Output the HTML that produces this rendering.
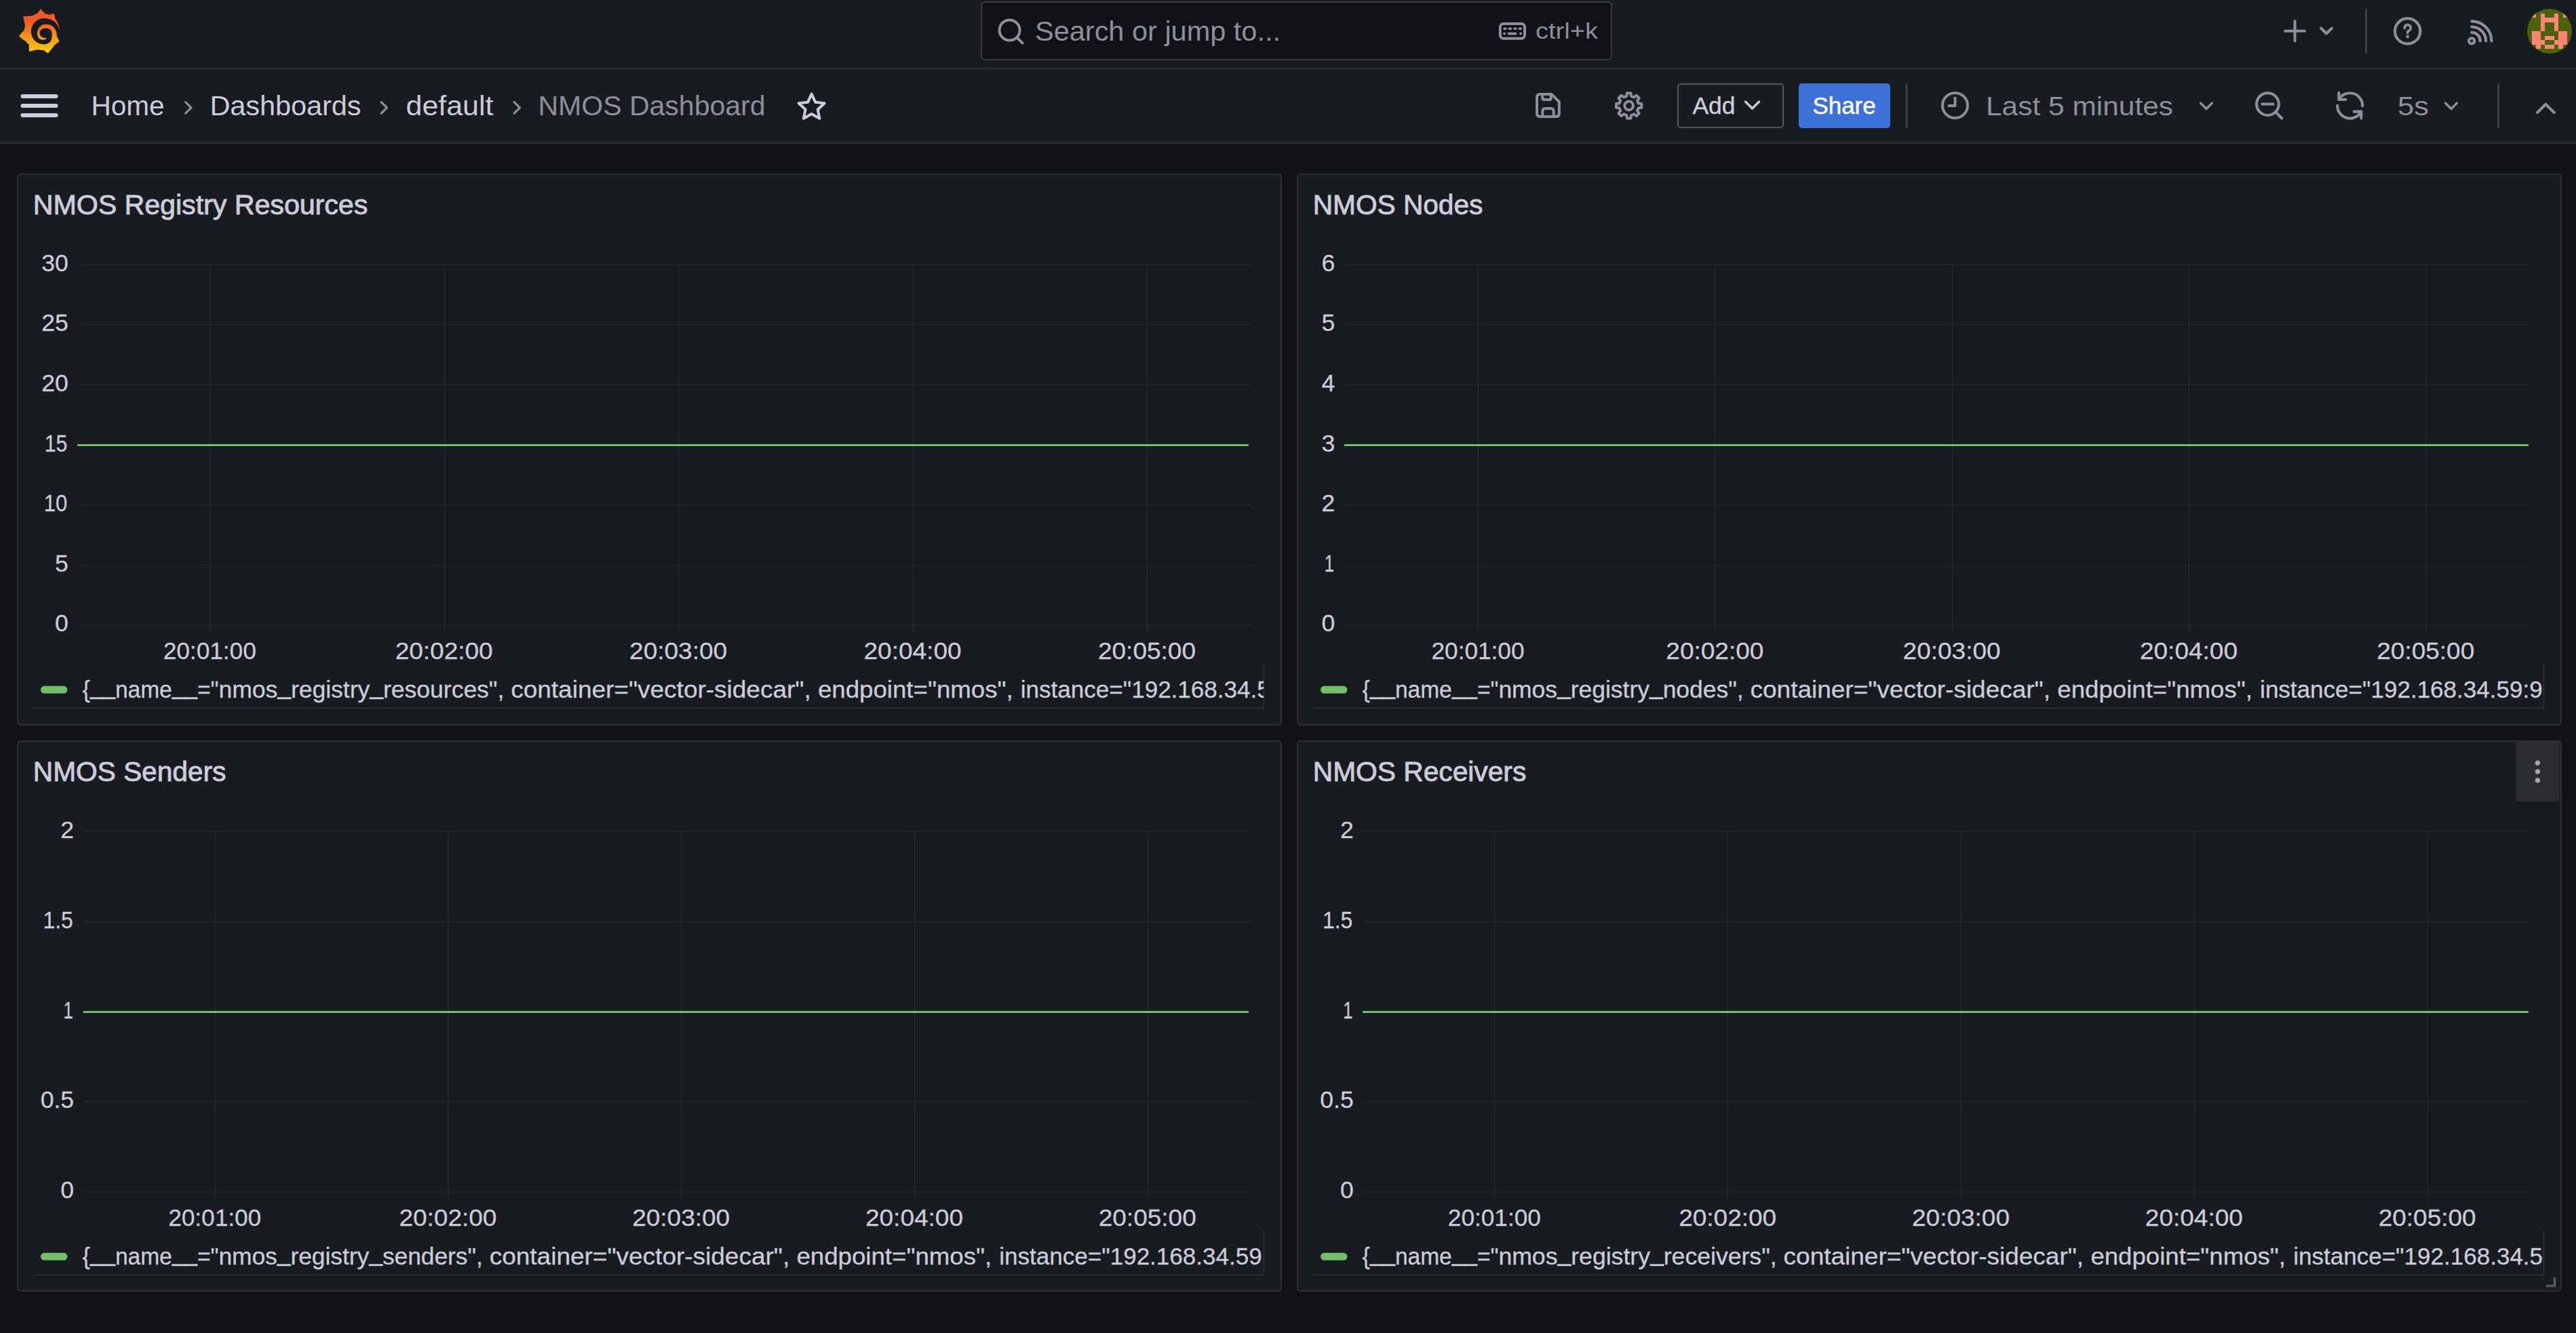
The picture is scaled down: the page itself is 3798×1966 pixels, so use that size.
<!DOCTYPE html>
<html><head><meta charset="utf-8"><title>NMOS Dashboard - Grafana</title>
<style>
html,body{margin:0;padding:0;}
body{width:3798px;height:1966px;overflow:hidden;background:#111217;position:relative;font-family:"Liberation Sans",sans-serif;}
.bar1{position:absolute;left:0;top:0;width:3798px;height:100px;background:#181b1f;border-bottom:2px solid #2e3036;}
.bar2{position:absolute;left:0;top:102px;width:3798px;height:108px;background:#181b1f;border-bottom:2px solid #2e3036;}
.panel{position:absolute;background:#181b1f;border:2px solid #2e3036;border-radius:5px;}
.ov{position:absolute;left:0;top:0;}
svg text{font-family:"Liberation Sans",sans-serif;white-space:pre;}
</style></head><body>
<header class="bar1"></header>
<nav class="bar2"></nav>
<div style="position:absolute;left:1446px;top:2px;width:927px;height:83px;border:2px solid #3a3b41;border-radius:6px;background:#111217"></div><div style="position:absolute;left:2473px;top:123px;width:153px;height:62px;border:2px solid #52555d;border-radius:5px"></div><div style="position:absolute;left:2652px;top:123px;width:135px;height:66px;border-radius:5px;background:#3d71d9"></div><div class="panel" style="left:25px;top:256px;width:1861px;height:810px"></div><div class="panel" style="left:1912px;top:256px;width:1861px;height:810px"></div><div class="panel" style="left:25px;top:1092px;width:1861px;height:809px"></div><div class="panel" style="left:1912px;top:1092px;width:1861px;height:809px"></div><div style="position:absolute;left:3709px;top:1094px;width:65px;height:88px;border-radius:5px;background:#2a2c31"></div>
<svg class="ov" width="3798" height="1966" viewBox="0 0 3798 1966"><g transform="translate(20,8) scale(0.057)">
<defs><linearGradient id="lg" x1="0" y1="80" x2="0" y2="1250" gradientUnits="userSpaceOnUse"><stop offset="0" stop-color="#f05a28"/><stop offset="0.3" stop-color="#f05a28"/><stop offset="1" stop-color="#fbd50a"/></linearGradient></defs>
<path fill="url(#lg)" d="M710 90 C740 130 780 170 805 205 C850 225 900 235 945 238 C980 225 1020 215 1050 212 C1060 255 1070 300 1078 345 C1140 420 1180 520 1192 640 L1135 822 C1150 860 1170 900 1185 935 C1140 965 1100 995 1065 1020 C1010 1090 950 1170 885 1240 C850 1210 810 1180 770 1160 C710 1148 650 1145 590 1145 C530 1165 470 1180 405 1195 C400 1130 400 1070 398 1010 C360 985 340 960 320 930 C260 900 200 850 140 800 C180 740 220 690 268 655 C280 610 290 565 300 520 C280 440 260 360 250 282 C330 275 410 272 480 270 C520 250 570 225 610 210 C640 170 680 125 710 90 Z"/>
<path fill="#181b1f" d="M1192 642 C1160 520 1085 415 960 366 C880 340 830 334 790 334 A338 338 0 0 0 452 672 A338 338 0 0 0 790 1010 C870 1005 930 960 965 921 C985 890 995 850 995 800 L1123 816 L1260 816 L1260 642 Z"/>
<path fill="url(#lg)" d="M1123 830 C1125 720 1100 640 1045 570 C990 510 920 489 833 489 C700 489 612 600 612 737 C612 830 680 892 760 892 C800 892 835 878 856 848 C845 843 838 841 833 841 C740 841 675 790 675 715 C675 640 745 589 833 589 C920 589 991 640 991 715 C993 760 995 785 995 800 C990 860 980 900 965 921 L1123 921 Z"/>
</g><circle cx="1488.5" cy="44.5" r="15" fill="none" stroke="#8f8f9b" stroke-width="4"/><line x1="1499.5" y1="55.5" x2="1507.5" y2="63.5" stroke="#8f8f9b" stroke-width="4" stroke-linecap="round"/><text x="1526.00" y="60.40" font-size="40" fill="#8f8f9b" textLength="362.00" lengthAdjust="spacingAndGlyphs">Search or jump to...</text><rect x="2211.8" y="35" width="36.2" height="21.8" rx="5" fill="none" stroke="#8f8f9b" stroke-width="4"/><rect x="2216.3" y="40.5" width="5.5" height="3.6" rx="1.8" fill="#8f8f9b"/><rect x="2223.7" y="40.5" width="5.5" height="3.6" rx="1.8" fill="#8f8f9b"/><rect x="2231.1" y="40.5" width="5.5" height="3.6" rx="1.8" fill="#8f8f9b"/><rect x="2238.5" y="40.5" width="5.5" height="3.6" rx="1.8" fill="#8f8f9b"/><circle cx="2218.2" cy="49.6" r="2" fill="#8f8f9b"/><circle cx="2242" cy="49.6" r="2" fill="#8f8f9b"/><rect x="2222.5" y="47.8" width="14" height="3.6" rx="1.8" fill="#8f8f9b"/><text x="2264.00" y="57.10" font-size="33" fill="#8f8f9b" textLength="92.00" lengthAdjust="spacingAndGlyphs">ctrl+k</text><path d="M3383.5 31 V60.5 M3369 45.8 H3398" stroke="#8f8f9b" stroke-width="4" stroke-linecap="round" fill="none"/><path d="M3422 41.5 L3430 49.5 L3438 41.5" stroke="#8f8f9b" stroke-width="4" stroke-linecap="round" stroke-linejoin="round" fill="none"/><rect x="3487" y="13" width="3" height="66" fill="#3d4047"/><circle cx="3549.7" cy="45.9" r="18.7" fill="none" stroke="#8f8f9b" stroke-width="4.2"/><path d="M3545.3 41.3 A4.5 4.5 0 1 1 3551.6 45.2 Q3549.7 46.3 3549.7 48.4" stroke="#8f8f9b" stroke-width="3.8" stroke-linecap="round" fill="none"/><circle cx="3549.7" cy="54" r="2.4" fill="#8f8f9b"/><circle cx="3644.2" cy="60.4" r="4.1" fill="none" stroke="#8f8f9b" stroke-width="4"/><path d="M3644.3 47.9 A12.5 12.5 0 0 1 3656.8 60.4 M3644.3 39.6 A20.8 20.8 0 0 1 3665.1 60.4 M3644.3 31.3 A29.1 29.1 0 0 1 3673.4 60.4" stroke="#8f8f9b" stroke-width="4.2" stroke-linecap="round" fill="none"/><defs><clipPath id="avc"><circle cx="3759" cy="45.9" r="33"/></clipPath></defs><g clip-path="url(#avc)"><rect x="3720" y="8" width="80" height="80" fill="#4a620a"/><path d="M3732.60 19.70h6.58v6.58h-6.58zM3745.76 19.70h6.58v6.58h-6.58zM3765.50 19.70h6.58v6.58h-6.58zM3778.66 19.70h6.58v6.58h-6.58zM3745.76 26.28h6.58v6.58h-6.58zM3752.34 26.28h6.58v6.58h-6.58zM3758.92 26.28h6.58v6.58h-6.58zM3765.50 26.28h6.58v6.58h-6.58zM3745.76 32.86h6.58v6.58h-6.58zM3765.50 32.86h6.58v6.58h-6.58zM3745.76 39.44h6.58v6.58h-6.58zM3765.50 39.44h6.58v6.58h-6.58zM3732.60 46.02h6.58v6.58h-6.58zM3739.18 46.02h6.58v6.58h-6.58zM3772.08 46.02h6.58v6.58h-6.58zM3778.66 46.02h6.58v6.58h-6.58zM3732.60 52.60h6.58v6.58h-6.58zM3739.18 52.60h6.58v6.58h-6.58zM3752.34 52.60h6.58v6.58h-6.58zM3758.92 52.60h6.58v6.58h-6.58zM3772.08 52.60h6.58v6.58h-6.58zM3778.66 52.60h6.58v6.58h-6.58zM3732.60 59.18h6.58v6.58h-6.58zM3739.18 59.18h6.58v6.58h-6.58zM3745.76 59.18h6.58v6.58h-6.58zM3765.50 59.18h6.58v6.58h-6.58zM3772.08 59.18h6.58v6.58h-6.58zM3778.66 59.18h6.58v6.58h-6.58zM3739.18 65.76h6.58v6.58h-6.58zM3752.34 65.76h6.58v6.58h-6.58zM3758.92 65.76h6.58v6.58h-6.58zM3772.08 65.76h6.58v6.58h-6.58z" fill="#fd8477" shape-rendering="crispEdges"/></g><rect x="30.5" y="139.1" width="55" height="5.8" rx="2.9" fill="#ccccdc"/><rect x="30.5" y="153.1" width="55" height="5.8" rx="2.9" fill="#ccccdc"/><rect x="30.5" y="167.1" width="55" height="5.8" rx="2.9" fill="#ccccdc"/><text x="134.50" y="169.60" font-size="41" fill="#ccccdc" textLength="108.00" lengthAdjust="spacingAndGlyphs">Home</text><path d="M273.6 150.7 L281.9 158.9 L273.6 167.1" stroke="#8f8f9b" stroke-width="3.2" stroke-linecap="round" stroke-linejoin="round" fill="none"/><text x="309.50" y="169.60" font-size="41" fill="#ccccdc" textLength="223.00" lengthAdjust="spacingAndGlyphs">Dashboards</text><path d="M562.2 150.7 L570.5 158.9 L562.2 167.1" stroke="#8f8f9b" stroke-width="3.2" stroke-linecap="round" stroke-linejoin="round" fill="none"/><text x="598.50" y="169.60" font-size="41" fill="#ccccdc" textLength="129.00" lengthAdjust="spacingAndGlyphs">default</text><path d="M758.1 150.7 L766.4 158.9 L758.1 167.1" stroke="#8f8f9b" stroke-width="3.2" stroke-linecap="round" stroke-linejoin="round" fill="none"/><text x="793.50" y="169.60" font-size="41" fill="#8f8f9b" textLength="335.00" lengthAdjust="spacingAndGlyphs">NMOS Dashboard</text><polygon points="1196.60,138.50 1202.18,150.81 1215.62,152.32 1205.64,161.44 1208.36,174.68 1196.60,168.00 1184.84,174.68 1187.56,161.44 1177.58,152.32 1191.02,150.81" fill="none" stroke="#ccccdc" stroke-width="4" stroke-linejoin="round"/><path d="M2270.4 139 H2287.6 L2298.8 150.2 V167.6 Q2298.8 172 2294.4 172 H2270.4 Q2266 172 2266 167.6 V143.4 Q2266 139 2270.4 139 Z" fill="none" stroke="#8f8f9b" stroke-width="4" stroke-linejoin="round"/><path d="M2274.3 139 V144.6 Q2274.3 147.1 2276.8 147.1 H2284.2 Q2286.7 147.1 2286.7 144.6 V139" fill="none" stroke="#8f8f9b" stroke-width="4"/><path d="M2274.3 172 V164 Q2274.3 160 2278.3 160 H2286.7 Q2290.7 160 2290.7 164 V172" fill="none" stroke="#8f8f9b" stroke-width="4"/><polygon points="2415.69,152.49 2420.19,153.07 2420.19,158.73 2415.69,159.31 2413.98,163.45 2416.74,167.04 2412.74,171.04 2409.15,168.28 2405.01,169.99 2404.43,174.49 2398.77,174.49 2398.19,169.99 2394.05,168.28 2390.46,171.04 2386.46,167.04 2389.22,163.45 2387.51,159.31 2383.01,158.73 2383.01,153.07 2387.51,152.49 2389.22,148.35 2386.46,144.76 2390.46,140.76 2394.05,143.52 2398.19,141.81 2398.77,137.31 2404.43,137.31 2405.01,141.81 2409.15,143.52 2412.74,140.76 2416.74,144.76 2413.98,148.35" fill="none" stroke="#8f8f9b" stroke-width="4" stroke-linejoin="round"/><circle cx="2401.6" cy="155.9" r="6.3" fill="none" stroke="#8f8f9b" stroke-width="4"/><text x="2495.50" y="168.40" font-size="35" fill="#ccccdc" textLength="63.00" lengthAdjust="spacingAndGlyphs" stroke="#ccccdc" stroke-width="0.4">Add</text><path d="M2573.5 150 L2583.5 160 L2593.5 150" stroke="#ccccdc" stroke-width="3.5" stroke-linecap="round" stroke-linejoin="round" fill="none"/><text x="2672.60" y="168.40" font-size="35" fill="#ffffff" textLength="93.00" lengthAdjust="spacingAndGlyphs" stroke="#ffffff" stroke-width="0.5">Share</text><rect x="2809.5" y="123" width="3" height="66" fill="#3d4047"/><circle cx="2882.5" cy="155.5" r="18.5" fill="none" stroke="#8f8f9b" stroke-width="4"/><path d="M2882.5 144.5 V156 H2873.5" stroke="#8f8f9b" stroke-width="4" stroke-linecap="round" stroke-linejoin="round" fill="none"/><text x="2928.00" y="169.70" font-size="39" fill="#8f8f9b" textLength="276.00" lengthAdjust="spacingAndGlyphs">Last 5 minutes</text><path d="M3244.5 152 L3253 160.5 L3261.5 152" stroke="#8f8f9b" stroke-width="3.5" stroke-linecap="round" stroke-linejoin="round" fill="none"/><circle cx="3343.4" cy="153.6" r="16.4" fill="none" stroke="#8f8f9b" stroke-width="4"/><path d="M3355 165.2 L3364.3 174.5 M3335.3 153.6 H3351.5" stroke="#8f8f9b" stroke-width="4" stroke-linecap="round" fill="none"/><path d="M3448.4 146.7 A18.6 18.6 0 0 1 3483.2 156.3 M3446.2 155.8 A18.6 18.6 0 0 0 3481.3 164.6" stroke="#8f8f9b" stroke-width="4.1" stroke-linecap="round" fill="none"/><path d="M3448.4 136.9 V146.7 H3458.2 M3470.8 164.6 H3481.3 V174.4" stroke="#8f8f9b" stroke-width="4.1" stroke-linecap="round" stroke-linejoin="round" fill="none"/><text x="3535.00" y="169.70" font-size="39" fill="#8f8f9b" textLength="46.00" lengthAdjust="spacingAndGlyphs">5s</text><path d="M3605.5 152 L3614 160.5 L3622.5 152" stroke="#8f8f9b" stroke-width="3.5" stroke-linecap="round" stroke-linejoin="round" fill="none"/><rect x="3682" y="123" width="3" height="66" fill="#3d4047"/><path d="M3741 166 L3753.3 153.8 L3765.8 166" stroke="#8f8f9b" stroke-width="4.2" stroke-linecap="round" stroke-linejoin="round" fill="none"/><text x="48.80" y="315.80" font-size="40" fill="#ccccdc" textLength="493.50" lengthAdjust="spacingAndGlyphs" stroke="#ccccdc" stroke-width="0.9">NMOS Registry Resources</text><rect x="115.2" y="390" width="1727.2" height="1" fill="#2a2d32"/><text x="100.70" y="400.30" font-size="35.5" fill="#ccccdc" text-anchor="end" stroke="#ccccdc" stroke-width="0.3">30</text><rect x="115.2" y="478" width="1727.2" height="1" fill="#2a2d32"/><text x="100.70" y="488.30" font-size="35.5" fill="#ccccdc" text-anchor="end" stroke="#ccccdc" stroke-width="0.3">25</text><rect x="115.2" y="567" width="1727.2" height="1" fill="#2a2d32"/><text x="100.70" y="577.30" font-size="35.5" fill="#ccccdc" text-anchor="end" stroke="#ccccdc" stroke-width="0.3">20</text><rect x="115.2" y="655" width="1727.2" height="1" fill="#2a2d32"/><text x="99.40" y="665.80" font-size="35.5" fill="#ccccdc" text-anchor="end" textLength="33.60" lengthAdjust="spacingAndGlyphs" stroke="#ccccdc" stroke-width="0.3">15</text><rect x="115.2" y="744" width="1727.2" height="1" fill="#2a2d32"/><text x="99.40" y="754.30" font-size="35.5" fill="#ccccdc" text-anchor="end" textLength="34.59" lengthAdjust="spacingAndGlyphs" stroke="#ccccdc" stroke-width="0.3">10</text><rect x="115.2" y="833" width="1727.2" height="1" fill="#2a2d32"/><text x="100.70" y="843.30" font-size="35.5" fill="#ccccdc" text-anchor="end" stroke="#ccccdc" stroke-width="0.3">5</text><rect x="115.2" y="921" width="1727.2" height="1" fill="#2a2d32"/><text x="100.70" y="931.30" font-size="35.5" fill="#ccccdc" text-anchor="end" stroke="#ccccdc" stroke-width="0.3">0</text><rect x="309" y="390" width="1" height="543" fill="#2a2d32"/><text x="309.22" y="972.20" font-size="35.5" fill="#ccccdc" text-anchor="middle" textLength="137.00" lengthAdjust="spacingAndGlyphs" stroke="#ccccdc" stroke-width="0.3">20:01:00</text><rect x="655" y="390" width="1" height="543" fill="#2a2d32"/><text x="654.66" y="972.20" font-size="35.5" fill="#ccccdc" text-anchor="middle" textLength="144.00" lengthAdjust="spacingAndGlyphs" stroke="#ccccdc" stroke-width="0.3">20:02:00</text><rect x="1000" y="390" width="1" height="543" fill="#2a2d32"/><text x="1000.10" y="972.20" font-size="35.5" fill="#ccccdc" text-anchor="middle" textLength="144.00" lengthAdjust="spacingAndGlyphs" stroke="#ccccdc" stroke-width="0.3">20:03:00</text><rect x="1346" y="390" width="1" height="543" fill="#2a2d32"/><text x="1345.54" y="972.20" font-size="35.5" fill="#ccccdc" text-anchor="middle" textLength="144.00" lengthAdjust="spacingAndGlyphs" stroke="#ccccdc" stroke-width="0.3">20:04:00</text><rect x="1691" y="390" width="1" height="543" fill="#2a2d32"/><text x="1690.98" y="972.20" font-size="35.5" fill="#ccccdc" text-anchor="middle" textLength="144.00" lengthAdjust="spacingAndGlyphs" stroke="#ccccdc" stroke-width="0.3">20:05:00</text><rect x="114.2" y="655" width="1726.7" height="3" fill="#73bf69"/><rect x="60" y="1011.8" width="39.4" height="11" rx="5.5" fill="#73bf69"/><defs><clipPath id="lc0"><rect x="115" y="976" width="1748" height="68"/></clipPath></defs><g clip-path="url(#lc0)"><text x="121.50" y="1028.80" font-size="35.5" fill="#ccccdc" textLength="200.90" lengthAdjust="spacingAndGlyphs" stroke="#ccccdc" stroke-width="0.3">{<tspan dy="-5">__</tspan><tspan dy="5">​</tspan>name<tspan dy="-5">__</tspan><tspan dy="5">​</tspan>=&quot;</text><text x="322.40" y="1028.80" font-size="35.5" fill="#ccccdc" textLength="430.80" lengthAdjust="spacingAndGlyphs" stroke="#ccccdc" stroke-width="0.3">nmos<tspan dy="-5">_</tspan><tspan dy="5">​</tspan>registry<tspan dy="-5">_</tspan><tspan dy="5">​</tspan>resources&quot;, </text><text x="753.20" y="1028.80" font-size="35.5" fill="#ccccdc" textLength="452.80" lengthAdjust="spacingAndGlyphs" stroke="#ccccdc" stroke-width="0.3">container=&quot;vector-sidecar&quot;, </text><text x="1206.00" y="1028.80" font-size="35.5" fill="#ccccdc" textLength="297.80" lengthAdjust="spacingAndGlyphs" stroke="#ccccdc" stroke-width="0.3">endpoint=&quot;nmos&quot;, </text><text x="1504.80" y="1028.80" font-size="35.5" fill="#ccccdc" textLength="1154.45" lengthAdjust="spacingAndGlyphs" stroke="#ccccdc" stroke-width="0.3">instance=&quot;192.168.34.59:9100&quot;, job=&quot;nmos-registry&quot;, namespace=&quot;nmos&quot;}</text></g><rect x="49" y="1044" width="1814" height="1" fill="#3e3c39"/><rect x="1863" y="979" width="1" height="66" fill="#3e3c39"/><text x="1935.80" y="315.80" font-size="40" fill="#ccccdc" textLength="250.50" lengthAdjust="spacingAndGlyphs" stroke="#ccccdc" stroke-width="0.9">NMOS Nodes</text><rect x="1982.8" y="390" width="1746.6" height="1" fill="#2a2d32"/><text x="1968.30" y="400.30" font-size="35.5" fill="#ccccdc" text-anchor="end" stroke="#ccccdc" stroke-width="0.3">6</text><rect x="1982.8" y="478" width="1746.6" height="1" fill="#2a2d32"/><text x="1968.30" y="488.30" font-size="35.5" fill="#ccccdc" text-anchor="end" stroke="#ccccdc" stroke-width="0.3">5</text><rect x="1982.8" y="567" width="1746.6" height="1" fill="#2a2d32"/><text x="1968.30" y="577.30" font-size="35.5" fill="#ccccdc" text-anchor="end" stroke="#ccccdc" stroke-width="0.3">4</text><rect x="1982.8" y="655" width="1746.6" height="1" fill="#2a2d32"/><text x="1968.30" y="665.80" font-size="35.5" fill="#ccccdc" text-anchor="end" stroke="#ccccdc" stroke-width="0.3">3</text><rect x="1982.8" y="744" width="1746.6" height="1" fill="#2a2d32"/><text x="1968.30" y="754.30" font-size="35.5" fill="#ccccdc" text-anchor="end" stroke="#ccccdc" stroke-width="0.3">2</text><rect x="1982.8" y="833" width="1746.6" height="1" fill="#2a2d32"/><text x="1967.00" y="843.30" font-size="35.5" fill="#ccccdc" text-anchor="end" textLength="14.22" lengthAdjust="spacingAndGlyphs" stroke="#ccccdc" stroke-width="0.3">1</text><rect x="1982.8" y="921" width="1746.6" height="1" fill="#2a2d32"/><text x="1968.30" y="931.30" font-size="35.5" fill="#ccccdc" text-anchor="end" stroke="#ccccdc" stroke-width="0.3">0</text><rect x="2179" y="390" width="1" height="543" fill="#2a2d32"/><text x="2179.00" y="972.20" font-size="35.5" fill="#ccccdc" text-anchor="middle" textLength="137.00" lengthAdjust="spacingAndGlyphs" stroke="#ccccdc" stroke-width="0.3">20:01:00</text><rect x="2528" y="390" width="1" height="543" fill="#2a2d32"/><text x="2528.32" y="972.20" font-size="35.5" fill="#ccccdc" text-anchor="middle" textLength="144.00" lengthAdjust="spacingAndGlyphs" stroke="#ccccdc" stroke-width="0.3">20:02:00</text><rect x="2878" y="390" width="1" height="543" fill="#2a2d32"/><text x="2877.64" y="972.20" font-size="35.5" fill="#ccccdc" text-anchor="middle" textLength="144.00" lengthAdjust="spacingAndGlyphs" stroke="#ccccdc" stroke-width="0.3">20:03:00</text><rect x="3227" y="390" width="1" height="543" fill="#2a2d32"/><text x="3226.96" y="972.20" font-size="35.5" fill="#ccccdc" text-anchor="middle" textLength="144.00" lengthAdjust="spacingAndGlyphs" stroke="#ccccdc" stroke-width="0.3">20:04:00</text><rect x="3576" y="390" width="1" height="543" fill="#2a2d32"/><text x="3576.28" y="972.20" font-size="35.5" fill="#ccccdc" text-anchor="middle" textLength="144.00" lengthAdjust="spacingAndGlyphs" stroke="#ccccdc" stroke-width="0.3">20:05:00</text><rect x="1981.8" y="655" width="1746.1" height="3" fill="#73bf69"/><rect x="1947" y="1011.8" width="39.4" height="11" rx="5.5" fill="#73bf69"/><defs><clipPath id="lc1"><rect x="2002" y="976" width="1748" height="68"/></clipPath></defs><g clip-path="url(#lc1)"><text x="2008.50" y="1028.80" font-size="35.5" fill="#ccccdc" textLength="200.90" lengthAdjust="spacingAndGlyphs" stroke="#ccccdc" stroke-width="0.3">{<tspan dy="-5">__</tspan><tspan dy="5">​</tspan>name<tspan dy="-5">__</tspan><tspan dy="5">​</tspan>=&quot;</text><text x="2209.40" y="1028.80" font-size="35.5" fill="#ccccdc" textLength="371.10" lengthAdjust="spacingAndGlyphs" stroke="#ccccdc" stroke-width="0.3">nmos<tspan dy="-5">_</tspan><tspan dy="5">​</tspan>registry<tspan dy="-5">_</tspan><tspan dy="5">​</tspan>nodes&quot;, </text><text x="2580.50" y="1028.80" font-size="35.5" fill="#ccccdc" textLength="452.80" lengthAdjust="spacingAndGlyphs" stroke="#ccccdc" stroke-width="0.3">container=&quot;vector-sidecar&quot;, </text><text x="3033.30" y="1028.80" font-size="35.5" fill="#ccccdc" textLength="297.80" lengthAdjust="spacingAndGlyphs" stroke="#ccccdc" stroke-width="0.3">endpoint=&quot;nmos&quot;, </text><text x="3332.10" y="1028.80" font-size="35.5" fill="#ccccdc" textLength="1154.45" lengthAdjust="spacingAndGlyphs" stroke="#ccccdc" stroke-width="0.3">instance=&quot;192.168.34.59:9100&quot;, job=&quot;nmos-registry&quot;, namespace=&quot;nmos&quot;}</text></g><rect x="1936" y="1044" width="1814" height="1" fill="#3e3c39"/><rect x="3750" y="979" width="1" height="66" fill="#3e3c39"/><text x="48.80" y="1151.80" font-size="40" fill="#ccccdc" textLength="284.50" lengthAdjust="spacingAndGlyphs" stroke="#ccccdc" stroke-width="0.9">NMOS Senders</text><rect x="123.6" y="1226" width="1718.8" height="1" fill="#2a2d32"/><text x="109.10" y="1236.30" font-size="35.5" fill="#ccccdc" text-anchor="end" stroke="#ccccdc" stroke-width="0.3">2</text><rect x="123.6" y="1359" width="1718.8" height="1" fill="#2a2d32"/><text x="107.80" y="1369.30" font-size="35.5" fill="#ccccdc" text-anchor="end" textLength="44.42" lengthAdjust="spacingAndGlyphs" stroke="#ccccdc" stroke-width="0.3">1.5</text><rect x="123.6" y="1492" width="1718.8" height="1" fill="#2a2d32"/><text x="107.80" y="1502.30" font-size="35.5" fill="#ccccdc" text-anchor="end" textLength="14.22" lengthAdjust="spacingAndGlyphs" stroke="#ccccdc" stroke-width="0.3">1</text><rect x="123.6" y="1624" width="1718.8" height="1" fill="#2a2d32"/><text x="109.10" y="1634.30" font-size="35.5" fill="#ccccdc" text-anchor="end" stroke="#ccccdc" stroke-width="0.3">0.5</text><rect x="123.6" y="1757" width="1718.8" height="1" fill="#2a2d32"/><text x="109.10" y="1767.30" font-size="35.5" fill="#ccccdc" text-anchor="end" stroke="#ccccdc" stroke-width="0.3">0</text><rect x="317" y="1226" width="1" height="543" fill="#2a2d32"/><text x="316.68" y="1808.20" font-size="35.5" fill="#ccccdc" text-anchor="middle" textLength="137.00" lengthAdjust="spacingAndGlyphs" stroke="#ccccdc" stroke-width="0.3">20:01:00</text><rect x="660" y="1226" width="1" height="543" fill="#2a2d32"/><text x="660.44" y="1808.20" font-size="35.5" fill="#ccccdc" text-anchor="middle" textLength="144.00" lengthAdjust="spacingAndGlyphs" stroke="#ccccdc" stroke-width="0.3">20:02:00</text><rect x="1004" y="1226" width="1" height="543" fill="#2a2d32"/><text x="1004.20" y="1808.20" font-size="35.5" fill="#ccccdc" text-anchor="middle" textLength="144.00" lengthAdjust="spacingAndGlyphs" stroke="#ccccdc" stroke-width="0.3">20:03:00</text><rect x="1348" y="1226" width="1" height="543" fill="#2a2d32"/><text x="1347.96" y="1808.20" font-size="35.5" fill="#ccccdc" text-anchor="middle" textLength="144.00" lengthAdjust="spacingAndGlyphs" stroke="#ccccdc" stroke-width="0.3">20:04:00</text><rect x="1692" y="1226" width="1" height="543" fill="#2a2d32"/><text x="1691.72" y="1808.20" font-size="35.5" fill="#ccccdc" text-anchor="middle" textLength="144.00" lengthAdjust="spacingAndGlyphs" stroke="#ccccdc" stroke-width="0.3">20:05:00</text><rect x="122.6" y="1491" width="1718.3" height="3" fill="#73bf69"/><rect x="60" y="1847.8" width="39.4" height="11" rx="5.5" fill="#73bf69"/><defs><clipPath id="lc2"><rect x="115" y="1812" width="1748" height="68"/></clipPath></defs><g clip-path="url(#lc2)"><text x="121.50" y="1864.80" font-size="35.5" fill="#ccccdc" textLength="200.90" lengthAdjust="spacingAndGlyphs" stroke="#ccccdc" stroke-width="0.3">{<tspan dy="-5">__</tspan><tspan dy="5">​</tspan>name<tspan dy="-5">__</tspan><tspan dy="5">​</tspan>=&quot;</text><text x="322.40" y="1864.80" font-size="35.5" fill="#ccccdc" textLength="399.30" lengthAdjust="spacingAndGlyphs" stroke="#ccccdc" stroke-width="0.3">nmos<tspan dy="-5">_</tspan><tspan dy="5">​</tspan>registry<tspan dy="-5">_</tspan><tspan dy="5">​</tspan>senders&quot;, </text><text x="721.70" y="1864.80" font-size="35.5" fill="#ccccdc" textLength="452.80" lengthAdjust="spacingAndGlyphs" stroke="#ccccdc" stroke-width="0.3">container=&quot;vector-sidecar&quot;, </text><text x="1174.50" y="1864.80" font-size="35.5" fill="#ccccdc" textLength="297.80" lengthAdjust="spacingAndGlyphs" stroke="#ccccdc" stroke-width="0.3">endpoint=&quot;nmos&quot;, </text><text x="1473.30" y="1864.80" font-size="35.5" fill="#ccccdc" textLength="1154.45" lengthAdjust="spacingAndGlyphs" stroke="#ccccdc" stroke-width="0.3">instance=&quot;192.168.34.59:9100&quot;, job=&quot;nmos-registry&quot;, namespace=&quot;nmos&quot;}</text></g><rect x="49" y="1880" width="1814" height="1" fill="#3e3c39"/><rect x="1863" y="1815" width="1" height="66" fill="#3e3c39"/><text x="1935.80" y="1151.80" font-size="40" fill="#ccccdc" textLength="314.50" lengthAdjust="spacingAndGlyphs" stroke="#ccccdc" stroke-width="0.9">NMOS Receivers</text><rect x="2010.2" y="1226" width="1719.2" height="1" fill="#2a2d32"/><text x="1995.70" y="1236.30" font-size="35.5" fill="#ccccdc" text-anchor="end" stroke="#ccccdc" stroke-width="0.3">2</text><rect x="2010.2" y="1359" width="1719.2" height="1" fill="#2a2d32"/><text x="1994.40" y="1369.30" font-size="35.5" fill="#ccccdc" text-anchor="end" textLength="44.42" lengthAdjust="spacingAndGlyphs" stroke="#ccccdc" stroke-width="0.3">1.5</text><rect x="2010.2" y="1492" width="1719.2" height="1" fill="#2a2d32"/><text x="1994.40" y="1502.30" font-size="35.5" fill="#ccccdc" text-anchor="end" textLength="14.22" lengthAdjust="spacingAndGlyphs" stroke="#ccccdc" stroke-width="0.3">1</text><rect x="2010.2" y="1624" width="1719.2" height="1" fill="#2a2d32"/><text x="1995.70" y="1634.30" font-size="35.5" fill="#ccccdc" text-anchor="end" stroke="#ccccdc" stroke-width="0.3">0.5</text><rect x="2010.2" y="1757" width="1719.2" height="1" fill="#2a2d32"/><text x="1995.70" y="1767.30" font-size="35.5" fill="#ccccdc" text-anchor="end" stroke="#ccccdc" stroke-width="0.3">0</text><rect x="2203" y="1226" width="1" height="543" fill="#2a2d32"/><text x="2203.32" y="1808.20" font-size="35.5" fill="#ccccdc" text-anchor="middle" textLength="137.00" lengthAdjust="spacingAndGlyphs" stroke="#ccccdc" stroke-width="0.3">20:01:00</text><rect x="2547" y="1226" width="1" height="543" fill="#2a2d32"/><text x="2547.16" y="1808.20" font-size="35.5" fill="#ccccdc" text-anchor="middle" textLength="144.00" lengthAdjust="spacingAndGlyphs" stroke="#ccccdc" stroke-width="0.3">20:02:00</text><rect x="2891" y="1226" width="1" height="543" fill="#2a2d32"/><text x="2891.00" y="1808.20" font-size="35.5" fill="#ccccdc" text-anchor="middle" textLength="144.00" lengthAdjust="spacingAndGlyphs" stroke="#ccccdc" stroke-width="0.3">20:03:00</text><rect x="3235" y="1226" width="1" height="543" fill="#2a2d32"/><text x="3234.84" y="1808.20" font-size="35.5" fill="#ccccdc" text-anchor="middle" textLength="144.00" lengthAdjust="spacingAndGlyphs" stroke="#ccccdc" stroke-width="0.3">20:04:00</text><rect x="3579" y="1226" width="1" height="543" fill="#2a2d32"/><text x="3578.68" y="1808.20" font-size="35.5" fill="#ccccdc" text-anchor="middle" textLength="144.00" lengthAdjust="spacingAndGlyphs" stroke="#ccccdc" stroke-width="0.3">20:05:00</text><rect x="2009.2" y="1491" width="1718.7" height="3" fill="#73bf69"/><rect x="1947" y="1847.8" width="39.4" height="11" rx="5.5" fill="#73bf69"/><defs><clipPath id="lc3"><rect x="2002" y="1812" width="1748" height="68"/></clipPath></defs><g clip-path="url(#lc3)"><text x="2008.50" y="1864.80" font-size="35.5" fill="#ccccdc" textLength="200.90" lengthAdjust="spacingAndGlyphs" stroke="#ccccdc" stroke-width="0.3">{<tspan dy="-5">__</tspan><tspan dy="5">​</tspan>name<tspan dy="-5">__</tspan><tspan dy="5">​</tspan>=&quot;</text><text x="2209.40" y="1864.80" font-size="35.5" fill="#ccccdc" textLength="420.20" lengthAdjust="spacingAndGlyphs" stroke="#ccccdc" stroke-width="0.3">nmos<tspan dy="-5">_</tspan><tspan dy="5">​</tspan>registry<tspan dy="-5">_</tspan><tspan dy="5">​</tspan>receivers&quot;, </text><text x="2629.60" y="1864.80" font-size="35.5" fill="#ccccdc" textLength="452.80" lengthAdjust="spacingAndGlyphs" stroke="#ccccdc" stroke-width="0.3">container=&quot;vector-sidecar&quot;, </text><text x="3082.40" y="1864.80" font-size="35.5" fill="#ccccdc" textLength="297.80" lengthAdjust="spacingAndGlyphs" stroke="#ccccdc" stroke-width="0.3">endpoint=&quot;nmos&quot;, </text><text x="3381.20" y="1864.80" font-size="35.5" fill="#ccccdc" textLength="1154.45" lengthAdjust="spacingAndGlyphs" stroke="#ccccdc" stroke-width="0.3">instance=&quot;192.168.34.59:9100&quot;, job=&quot;nmos-registry&quot;, namespace=&quot;nmos&quot;}</text></g><rect x="1936" y="1880" width="1814" height="1" fill="#3e3c39"/><rect x="3750" y="1815" width="1" height="66" fill="#3e3c39"/><circle cx="3741.4" cy="1125.2" r="3.7" fill="#a4a4b0"/><circle cx="3741.4" cy="1138" r="3.7" fill="#a4a4b0"/><circle cx="3741.4" cy="1150.9" r="3.7" fill="#a4a4b0"/><path d="M3754 1896.5 H3766.5 V1884" stroke="#5a5a5e" stroke-width="3.5" fill="none"/></svg>
</body></html>
